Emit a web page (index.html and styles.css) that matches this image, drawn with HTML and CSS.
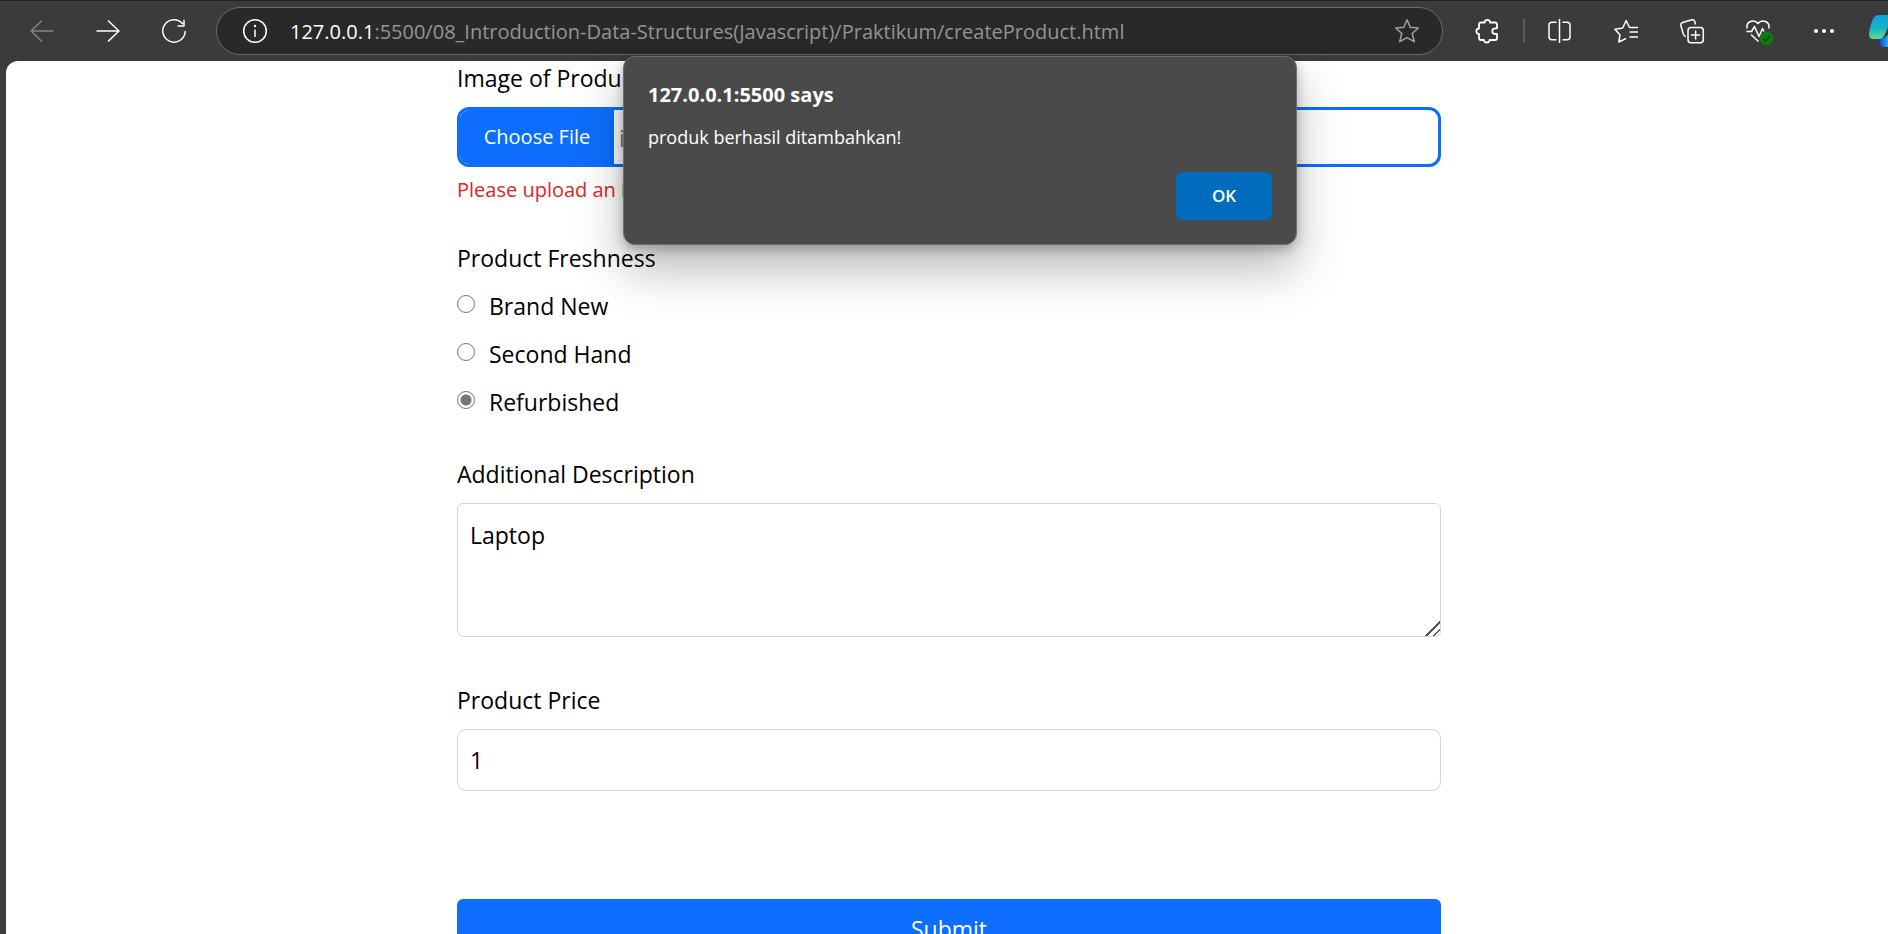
FILE: index.html
```html
<!DOCTYPE html>
<html lang="en">
<head>
<meta charset="utf-8">
<title>Create Product</title>
<link rel="stylesheet" href="styles.css">
</head>
<body>
<header class="toolbar">
  <nav class="nav">
    <button class="icon dim" aria-label="Back"><svg viewBox="0 0 24 24"><path d="M23.500 12H1M12 1.500 1 12l11 10.500"/></svg></button>
    <button class="icon" aria-label="Forward"><svg viewBox="0 0 24 24"><path d="M.5 12H23M12 1.500 23 12 12 22.500"/></svg></button>
    <button class="icon" aria-label="Reload"><svg viewBox="0 0 24 24"><path d="M23.200 12A11.200 11.200 0 1 1 20.800 5M22 .8V7H15.500"/></svg></button>
  </nav>
  <div class="address">
    <button class="icon" aria-label="Site information"><svg viewBox="0 0 24 24"><circle cx="12" cy="12" r="11.300"/><path d="M12 10.500V18"/><circle class="solid" cx="12" cy="7" r="1.200"/></svg></button>
    <div class="url"><span class="host">127.0.0.1</span>:5500/08_Introduction-Data-Structures(Javascript)/Praktikum/createProduct.html</div>
    <button class="icon soft" aria-label="Add to favorites"><svg viewBox="0 0 24 24"><path d="M12 .8 15.200 8.300 23.300 9 17.200 14.500 19.300 22.700 12 18.700 4.700 22.700 6.800 14.500.7 9 8.800 8.300Z"/></svg></button>
  </div>
  <div class="tools">
    <button class="icon bold" aria-label="Extensions"><svg viewBox="0 0 24 24"><path d="M6 3.500H9.700C9.700-.1 15-.1 15 3.500H20Q22 3.500 22 5.500V9.300H20.500C16.200 9.300 16.200 15 20.500 15H22V19Q22 21 20 21H14.500C14.500 24.300 9 24.300 9 21H6Q4 21 4 19V15C.5 15 .5 9.500 4 9.500V5.500Q4 3.500 6 3.500Z"/></svg></button>
    <span class="divider"></span>
    <div class="group">
      <button class="icon" aria-label="Split screen"><svg viewBox="0 0 24 24"><path d="M11.500 0V24M8.500 3.200H4Q1 3.200 1 6.200V17.800Q1 20.800 4 20.800H8.500M14.500 3.200H19Q22 3.200 22 6.200V17.800Q22 20.800 19 20.800H14.500"/></svg></button>
      <button class="icon" aria-label="Favorites"><svg viewBox="0 0 24 24"><path d="M24 8.500H15.500L12.200 1.500 8.700 9 1 10.200 6 16 4.800 23 12 19.500M15.500 13H24M15.500 18H24"/></svg></button>
      <button class="icon" aria-label="Collections"><svg viewBox="0 0 24 24"><rect x="8" y="8.500" width="15.300" height="15.300" rx="3"/><path d="M15.600 11.500V20.500M11 16H20.200M15.500 5.500 14.800 2.500Q14 .5 12 .8L2.500 3.500Q.5 4.500 .8 6.500L3.500 15.500Q4.300 17.500 6 17.500"/></svg></button>
      <button class="icon" aria-label="Browser essentials"><svg viewBox="0 0 24 24"><path d="M1.200 9.500C-.5 2.500 8-.5 12 4.500 16-.5 24.500 2.500 22.800 9.500M5 15.500 12.500 22.500M.5 12.500H5.500L8.500 7.500 13 17.500 16.500 9.500 18 12.500"/><circle class="badge" cx="20.500" cy="19.500" r="6.800"/><path class="tick" d="M17 20 19.500 22 24 17"/></svg></button>
      <button class="icon" aria-label="Settings and more"><svg viewBox="0 0 24 24"><circle class="solid" cx="4" cy="12" r="2"/><circle class="solid" cx="12" cy="12" r="2"/><circle class="solid" cx="20" cy="12" r="2"/></svg></button>
    </div>
    <button class="copilot" aria-label="Copilot"><svg viewBox="0 0 36 33"><defs><linearGradient id="ca" x1="0" y1="0" x2="0" y2="1"><stop offset="0" stop-color="#0f9fe0"/><stop offset=".55" stop-color="#16b5c5"/><stop offset="1" stop-color="#5fdc8d"/></linearGradient><linearGradient id="cb" x1="0" y1="0" x2="1" y2="0"><stop offset="0.2" stop-color="#1c3fc0"/><stop offset="1" stop-color="#19b4f5"/></linearGradient></defs><path fill="url(#cb)" d="M8 23H15L19 20V32H16Q12 32 11 29L9.500 25Z"/><path fill="url(#ca)" d="M10 0H24L16 19Q14 24 10 24H4Q0 24 0 19 1 10 4 4 6 0 10 0Z"/></svg></button>
  </div>
</header>

<main class="page">
  <form class="form">
    <div class="field upload">
      <label for="image">Image of Product</label>
      <div class="file">
        <input type="file" id="image">
        <span class="filename">image.png</span>
      </div>
      <p class="error">Please upload an image</p>
    </div>
    <fieldset class="field freshness">
      <legend>Product Freshness</legend>
      <label class="choice"><input type="radio" name="freshness">Brand New</label>
      <label class="choice"><input type="radio" name="freshness">Second Hand</label>
      <label class="choice"><input type="radio" name="freshness" checked>Refurbished</label>
    </fieldset>
    <div class="field description">
      <label for="description">Additional Description</label>
      <textarea id="description" rows="3">Laptop</textarea>
    </div>
    <div class="field price">
      <label for="price">Product Price</label>
      <input type="text" id="price" value="1">
    </div>
    <button class="submit" type="button">Submit</button>
  </form>
</main>

<div class="dialog" role="alertdialog" aria-labelledby="dialog-title" aria-describedby="dialog-text">
  <h2 id="dialog-title">127.0.0.1:5500 says</h2>
  <p id="dialog-text">produk berhasil ditambahkan!</p>
  <button class="ok">OK</button>
</div>
</body>
</html>
```

FILE: styles.css
```css
* { box-sizing: border-box; }

body {
  margin: 0;
  height: 100vh;
  overflow: hidden;
  display: flex;
  flex-direction: column;
  background: #3b3b3b;
  font-family: "Open Sans", "Noto Sans", sans-serif;
  font-size: 23px;
  line-height: 36px;
  color: #000;
}

button, input, textarea { font: inherit; color: inherit; }
button { border: 0; padding: 0; background: none; }
h2, p { margin: 0; }

/* Browser toolbar */
.toolbar {
  flex: none;
  height: 61px;
  padding: 6px 0 6px 30px;
  display: flex;
  align-items: center;
  border-top: 1px solid #202020;
}
.nav, .group { display: flex; gap: 42px; }
.icon { width: 24px; height: 24px; flex: none; color: #fff; }
.icon svg {
  display: block;
  width: 100%;
  height: 100%;
  overflow: visible;
  fill: none;
  stroke: currentColor;
  stroke-width: 1.5;
  stroke-linejoin: round;
}
.icon.dim { color: #858585; }
.icon.soft { color: #a0a0a0; }
.icon.bold svg { stroke-width: 1.8; }
.icon .solid { fill: currentColor; stroke: none; }
.icon .badge { fill: #107c10; stroke: none; }
.icon .tick { stroke: #0a3d0a; }

.address {
  flex: 1;
  height: 48px;
  margin: 0 32px 0 30px;
  padding: 0 23px 0 26px;
  display: flex;
  align-items: center;
  gap: 23px;
  border: 1px solid #6b6b6b;
  border-radius: 24px;
  background: #292929;
}
.url {
  flex: 1;
  min-width: 0;
  padding-top: 2px;
  overflow: hidden;
  white-space: nowrap;
  font-size: 20px;
  color: #959595;
}
.host { color: #fff; }
.tools { display: flex; align-items: center; }
.divider { width: 2px; height: 24px; margin: 0 23px 0 24px; background: #5c5c5c; }
.copilot { width: 19px; height: 33px; margin-left: 33px; overflow: hidden; }
.copilot svg { display: block; width: 36px; height: 33px; }

/* Page */
.page {
  flex: 1;
  min-height: 0;
  overflow: hidden;
  margin-left: 6px;
  padding-left: 4px;
  border-top-left-radius: 12px;
  background: #fff;
}
.form {
  max-width: 984px;
  margin: -1px auto 0;
  display: flex;
  flex-direction: column;
}
.field {
  margin: 0;
  padding: 0;
  border: 0;
  display: flex;
  flex-direction: column;
}
.upload { margin-bottom: 35px; }
.file {
  display: flex;
  height: 60px;
  margin-top: 11px;
  border: 3px solid #0d6efd;
  border-radius: 12px;
  overflow: hidden;
}
.file input { width: 154px; overflow: hidden; color: transparent; }
.file input::file-selector-button {
  width: 154px;
  height: 54px;
  margin: 0;
  border: 0;
  background: #0d6efd;
  color: #fff;
  font: inherit;
  font-size: 20px;
}
.filename { padding: 10px 5px; color: #777; }
.error { margin-top: 8px; font-size: 20px; line-height: 30px; color: #dc2626; }

.freshness { margin-bottom: 36px; gap: 12px; }
.freshness legend { padding: 0; margin-bottom: 12px; }
.choice { display: flex; gap: 14px; }
.choice input {
  width: 18px;
  height: 18px;
  margin: 7px 0 0;
}
.choice input:checked {
  appearance: none;
  border: 1px solid #767676;
  border-radius: 50%;
  background: radial-gradient(circle, #767676 5px, #fff 6px);
}

.description { margin-bottom: 45px; }
.description textarea {
  display: block;
  height: 134px;
  margin-top: 11px;
  padding: 13px 12px;
  border: 1px solid #d1d5db;
  border-radius: 6px;
  background: #fff;
}
.description textarea::-webkit-resizer {
  background: linear-gradient(135deg, transparent 48%, #555 48%, #555 57%, transparent 57%, transparent 74%, #555 74%, #555 83%, transparent 83%);
}
.price { margin-bottom: 108px; }
.price input {
  height: 62px;
  margin-top: 11px;
  padding: 0 12px;
  border: 1px solid #d1d5db;
  border-radius: 9px;
  background: #fff;
}
.submit {
  height: 60px;
  border-radius: 6px;
  background: #0d6efd;
  color: #fff;
}

/* Alert over the page */
.dialog {
  position: absolute;
  top: 56px;
  left: 50%;
  width: 674px;
  margin-left: -321px;
  padding: 20px 24px 24px;
  display: flex;
  flex-direction: column;
  border: 1px solid #6e6e6e;
  border-radius: 12px;
  background: #4a4a4a;
  color: #fff;
  box-shadow: 0 24px 48px rgba(0, 0, 0, .28), 0 4px 12px rgba(0, 0, 0, .25);
}
.dialog h2 { font-size: 20px; font-weight: 700; }
.dialog p { margin-top: 6px; font-size: 18px; }
.ok {
  align-self: flex-end;
  width: 96px;
  height: 48px;
  margin-top: 17px;
  border-radius: 6px;
  background: #006cbe;
  color: #fff;
  font-size: 17px;
  font-weight: 600;
}
```
